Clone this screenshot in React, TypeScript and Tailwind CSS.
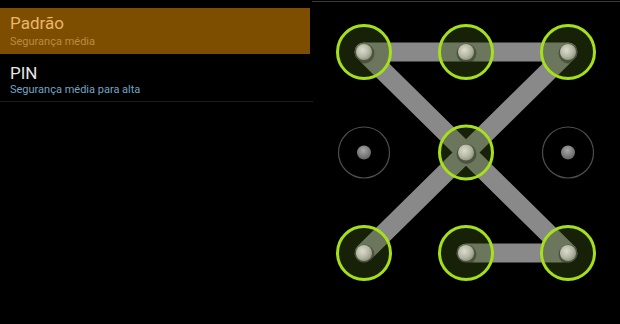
import React from "react";

const XS = [52, 154, 256];
const YS = [51, 151.5, 252];

type P = [number, number];
const pt = (c: number, r: number): P => [XS[c], YS[r]];

const segments: [P, P][] = [
  [pt(0, 0), pt(1, 0)],
  [pt(1, 0), pt(2, 0)],
  [pt(0, 0), pt(1, 1)],
  [pt(1, 1), pt(2, 2)],
  [pt(2, 0), pt(1, 1)],
  [pt(1, 1), pt(0, 2)],
  [pt(1, 2), pt(2, 2)],
];

const active = new Set(["0,0", "1,0", "2,0", "1,1", "0,2", "1,2", "2,2"]);

function Pattern() {
  const nodes: { c: number; r: number; on: boolean }[] = [];
  for (let r = 0; r < 3; r++)
    for (let c = 0; c < 3; c++) nodes.push({ c, r, on: active.has(`${c},${r}`) });
  return (
    <svg width="308" height="322" viewBox="0 0 308 322" className="block">
      <defs>
        <radialGradient id="dotOn" cx="0.4" cy="0.38" r="0.7">
          <stop offset="0" stopColor="#dcdccc" />
          <stop offset="0.6" stopColor="#b4b6a4" />
          <stop offset="1" stopColor="#8a8c7c" />
        </radialGradient>
        <radialGradient id="dotOff" cx="0.45" cy="0.35" r="0.7">
          <stop offset="0" stopColor="#a8a8a8" />
          <stop offset="1" stopColor="#5e5e5e" />
        </radialGradient>
      </defs>
      {segments.map(([a, b], i) => (
        <line
          key={i}
          x1={a[0]}
          y1={a[1] - 1}
          x2={b[0]}
          y2={b[1] - 1}
          stroke="#898989"
          strokeWidth={19}
          strokeLinecap="round"
        />
      ))}
      {nodes.map(({ c, r, on }) => {
        const [x, y] = pt(c, r);
        const cy = y - 1;
        return on ? (
          <g key={`${c}-${r}`}>
            <circle cx={x} cy={cy} r={26.5} fill="rgba(60,86,20,0.38)" />
            <circle cx={x} cy={cy} r={26.5} fill="none" stroke="#a6e01c" strokeWidth={3} />
            <circle cx={x + 0.5} cy={cy + 1.5} r={10} fill="rgba(30,36,20,0.4)" />
            <circle cx={x} cy={cy} r={8} fill="url(#dotOn)" />
          </g>
        ) : (
          <g key={`${c}-${r}`}>
            <circle cx={x} cy={cy} r={25.5} fill="none" stroke="#4e4e4e" strokeWidth={1.2} />
            <circle cx={x} cy={cy} r={7} fill="url(#dotOff)" />
          </g>
        );
      })}
    </svg>
  );
}

export default function App() {
  return (
    <div className="w-[620px] h-[324px] bg-black flex font-['Roboto',sans-serif] overflow-hidden">
      <div className="w-[312px] flex flex-col pt-2">
        <div className="w-[310px] h-[46px] bg-[#7d4e00] pl-[10px] pt-[5px]">
          <div className="text-[17px] leading-[20px] text-[#ebb56a]">Padrão</div>
          <div className="text-[11px] leading-[14px] text-[#bb8a45] mt-[2px]">Segurança média</div>
        </div>
        <div className="h-[47px] pl-[10px] pt-[9px]">
          <div className="text-[17px] leading-[20px] text-[#e6e6e6]">PIN</div>
          <div className="text-[11px] leading-[14px] text-[#72a4c4]">Segurança média para alta</div>
        </div>
        <div className="h-px w-[313px] bg-[#1c1c1c]" />
      </div>
      <div className="flex-1 flex flex-col">
        <div className="h-px mt-px bg-[#3a3a3a]" />
        <Pattern />
      </div>
    </div>
  );
}
